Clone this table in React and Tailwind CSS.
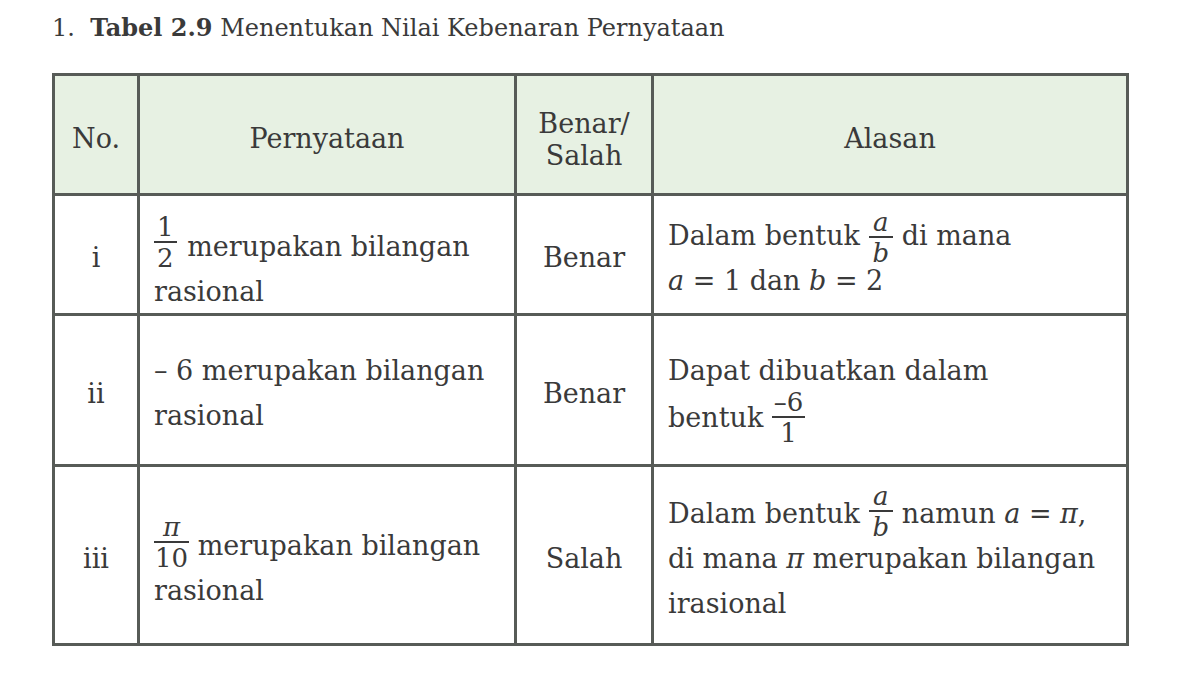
import React from 'react';

// Stacked fraction; negative margins keep it from stretching the line box
const Frac = ({ top, bottom, className = '', pad = 'px-[4px]' }) => (
  <span className={`inline-flex flex-col items-center text-[26px] leading-[22px] ${className}`}>
    <span className={`${pad} pb-[3px]`}>{top}</span>
    <span className="w-full border-t-2 border-[#3a3a3a]" />
    <span className={`${pad} pt-[4px]`}>{bottom}</span>
  </span>
);

const Var = ({ children }) => <i className="italic">{children}</i>;

const HeadCell = ({ children }) => (
  <div className="bg-[#e7f1e3] flex items-center justify-center text-center px-[10px] pt-[10px]">
    {children}
  </div>
);

const Cell = ({ children, center, className = 'pt-[6px]' }) => (
  <div className={`bg-white flex items-center px-[14px] ${center ? 'justify-center text-center' : ''} ${className}`}>
    <div className="leading-[45px]">{children}</div>
  </div>
);

export default function App() {
  return (
    <div className="min-h-screen bg-white text-[#3a3a3a] font-['DejaVu_Serif','Liberation_Serif',serif]">
      <div className="pl-[52px] pt-[14px] text-[24px] leading-[28px]">
        1.&nbsp; <span className="font-bold">Tabel 2.9</span> Menentukan Nilai Kebenaran Pernyataan
      </div>

      <div className="ml-[52px] mt-[31px] w-[1077px] grid grid-cols-[82px_374px_134px_472px] grid-rows-[117px_117px_148px_176px] gap-[3px] border-[3px] border-[#575b57] bg-[#575b57] text-[27px]">
        <HeadCell>No.</HeadCell>
        <HeadCell>Pernyataan</HeadCell>
        <HeadCell>
          <div className="leading-[32px]">Benar/<br />Salah</div>
        </HeadCell>
        <HeadCell>Alasan</HeadCell>

        {/* row i */}
        <Cell center>i</Cell>
        <Cell className="pt-[28px]">
          <Frac top="1" bottom="2" pad="px-[3px]" className="align-[20px] -mt-[10px] -mb-[8px] mr-[2px]" />
          {' '}merupakan bilangan<br />rasional
        </Cell>
        <Cell center>Benar</Cell>
        <Cell>
          Dalam bentuk <Frac top={<Var>a</Var>} bottom={<Var>b</Var>} className="align-[14px] -mt-[10px] -mb-[8px]" /> di mana<br />
          <Var>a</Var> = 1 dan <Var>b</Var> = 2
        </Cell>

        {/* row ii */}
        <Cell center>ii</Cell>
        <Cell>
          – 6 merupakan bilangan<br />rasional
        </Cell>
        <Cell center>Benar</Cell>
        <Cell className="pt-[8px]">
          Dapat dibuatkan dalam<br />
          bentuk <Frac top="–6" bottom="1" pad="px-[2px]" className="align-[16px] -mt-[2px] -mb-[8px]" />
        </Cell>

        {/* row iii */}
        <Cell center>iii</Cell>
        <Cell className="pt-[26px]">
          <Frac top={<Var>π</Var>} bottom="10" pad="px-[1px]" className="align-[19px] -mt-[10px] -mb-[8px]" />
          {' '}merupakan bilangan<br />rasional
        </Cell>
        <Cell center>Salah</Cell>
        <Cell>
          Dalam bentuk <Frac top={<Var>a</Var>} bottom={<Var>b</Var>} className="align-[18px] -mt-[14px] -mb-[12px]" /> namun <Var>a</Var> = <Var>π</Var>,<br />
          di mana <Var>π</Var> merupakan bilangan<br />
          irasional
        </Cell>
      </div>
    </div>
  );
}
